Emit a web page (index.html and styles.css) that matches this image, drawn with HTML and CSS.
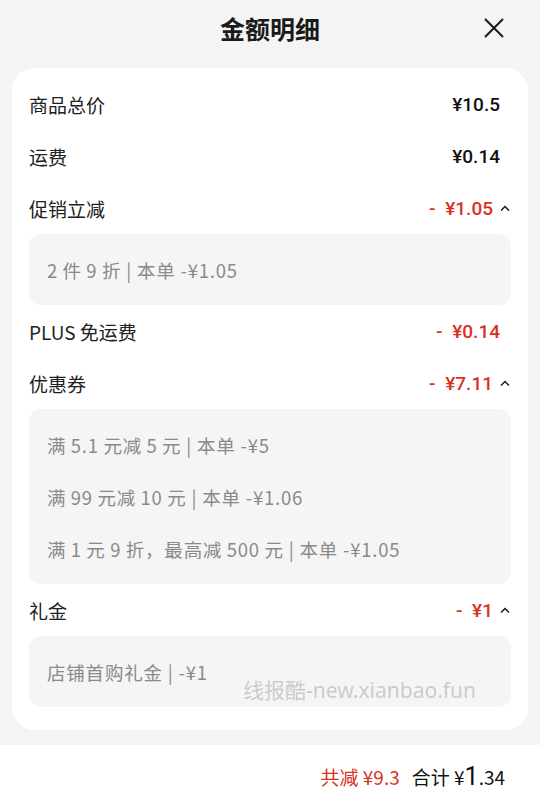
FILE: index.html
```html
<!DOCTYPE html>
<html lang="zh-CN">
<head>
    <meta charset="UTF-8">
    <meta name="viewport" content="width=device-width, initial-scale=1.0">
    <title>金额明细</title>
    <link rel="stylesheet" href="styles.css">
</head>
<body>
    <div class="sheet">
        <div class="header">
            <h2 class="title">金额明细</h2>
            <svg class="close" width="20" height="20" viewBox="0 0 20 20">
                <path d="M1 1 L19 19 M19 1 L1 19" stroke="#1a1a1a" stroke-width="2" fill="none"/>
            </svg>
        </div>

        <div class="card">
            <div class="row">
                <span class="label">商品总价</span>
                <span class="value">¥10.5</span>
            </div>
            <div class="row">
                <span class="label">运费</span>
                <span class="value">¥0.14</span>
            </div>
            <div class="row">
                <span class="label">促销立减</span>
                <span class="value red">-&ensp;¥1.05<svg class="caret" width="10" height="6" viewBox="0 0 10 6"><path d="M1 5.5 L5 1.5 L9 5.5" stroke="#1a1a1a" stroke-width="1.5" fill="none"/></svg></span>
            </div>
            <div class="detail">
                <div class="line">2&thinsp;件&thinsp;9&thinsp;折 | 本单 -¥1.05</div>
            </div>
            <div class="row">
                <span class="label">PLUS 免运费</span>
                <span class="value red">-&ensp;¥0.14</span>
            </div>
            <div class="row">
                <span class="label">优惠券</span>
                <span class="value red">-&ensp;¥7.11<svg class="caret" width="10" height="6" viewBox="0 0 10 6"><path d="M1 5.5 L5 1.5 L9 5.5" stroke="#1a1a1a" stroke-width="1.5" fill="none"/></svg></span>
            </div>
            <div class="detail">
                <div class="line">满&thinsp;5.1&thinsp;元减&thinsp;5&thinsp;元 | 本单 -¥5</div>
                <div class="line">满&thinsp;99&thinsp;元减&thinsp;10&thinsp;元 | 本单 -¥1.06</div>
                <div class="line">满&thinsp;1&thinsp;元&thinsp;9&thinsp;折，最高减&thinsp;500&thinsp;元 | 本单 -¥1.05</div>
            </div>
            <div class="row">
                <span class="label">礼金</span>
                <span class="value red">-&ensp;¥1<svg class="caret" width="10" height="6" viewBox="0 0 10 6"><path d="M1 5.5 L5 1.5 L9 5.5" stroke="#1a1a1a" stroke-width="1.5" fill="none"/></svg></span>
            </div>
            <div class="detail">
                <div class="line">店铺首购礼金 | -¥1</div>
            </div>
            <div class="watermark">线报酷-new.xianbao.fun</div>
        </div>

        <div class="footer">
            <span class="saved">共减 ¥9.3</span>
            <span class="total">合计 ¥<span class="big">1</span>.34</span>
        </div>
    </div>
</body>
</html>
```

FILE: styles.css
```css
body {
    margin: 0;
    background-color: #f4f4f4;
    font-family: "Noto Sans CJK SC", "Noto Sans", sans-serif;
    color: #1a1a1a;
}
.sheet {
    width: 540px;
    height: 802px;
    display: flex;
    flex-direction: column;
}
.header {
    height: 56px;
    display: flex;
    align-items: center;
    justify-content: center;
    position: relative;
}
.title {
    margin: 0;
    font-size: 25px;
    font-weight: 700;
    line-height: 1;
}
.close {
    position: absolute;
    right: 36px;
    top: 18px;
}
.card {
    position: relative;
    margin: 12px 12px 0;
    padding: 10px 17px 23px;
    background: #fff;
    border-radius: 22px;
}
.row {
    height: 52px;
    display: flex;
    align-items: center;
    justify-content: space-between;
    padding-right: 11px;
    font-size: 19px;
    color: #222;
}
.value {
    font-family: Roboto, "Noto Sans", sans-serif;
    font-weight: 500;
    display: flex;
    align-items: center;
    color: #111;
}
.value.red {
    color: #d8321f;
}
.caret {
    margin-left: 7px;
    margin-right: -10px;
}
.detail {
    background: #f5f5f5;
    border-radius: 12px;
    padding: 10px 18px 9px;
}
.line {
    height: 52px;
    line-height: 52px;
    font-size: 18.5px;
    letter-spacing: 0.8px;
    color: #8a8a8a;
}
.watermark {
    position: absolute;
    left: 231px;
    bottom: 26px;
    font-size: 21px;
    color: rgba(150, 150, 150, 0.45);
    font-family: "Noto Sans", "Noto Sans CJK SC", sans-serif;
}
.footer {
    margin-top: 15px;
    flex: 1;
    background: #fff;
    display: flex;
    justify-content: flex-end;
    align-items: center;
    padding: 6px 35px 0;
    gap: 12px;
    font-size: 19px;
}
.saved {
    color: #d8321f;
}
.total {
    color: #111;
}
.big {
    font-size: 25px;
    font-family: Roboto, sans-serif;
}
```
